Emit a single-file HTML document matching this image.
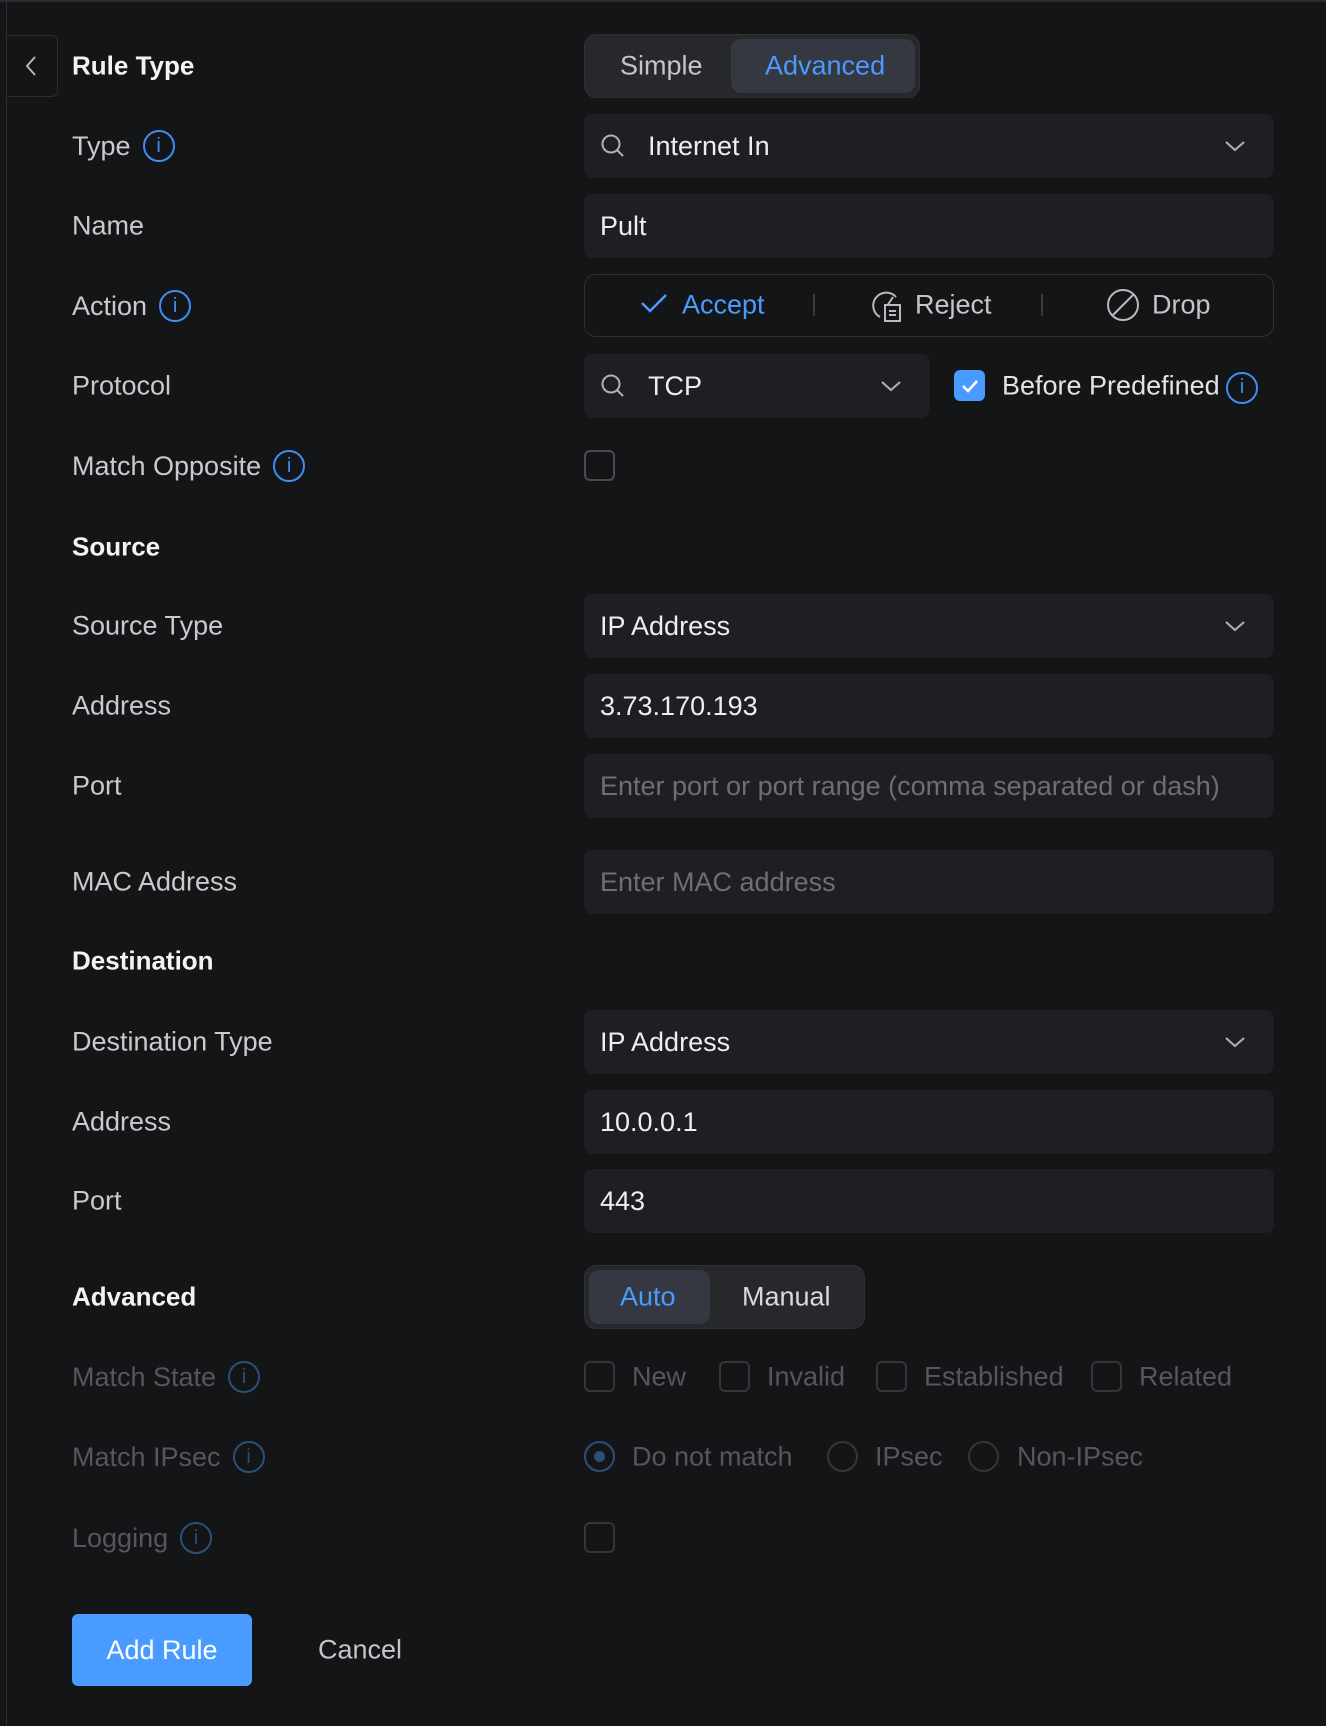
<!DOCTYPE html>
<html><head><meta charset="utf-8"><style>
*{box-sizing:border-box;margin:0;padding:0}
body{width:1326px;height:1726px;background:#141517;font-family:"Liberation Sans",sans-serif;color:#d4d5d8;position:relative;overflow:hidden;font-size:27px}
.a{position:absolute}
.lbl{position:absolute;left:72px;transform:translateY(-50%);color:#c9cacd;white-space:nowrap;display:flex;align-items:center;gap:12px;margin-top:1px}
.h{font-weight:bold;color:#f2f3f5;font-size:26px}
.dis{color:#55575c}
.fld{position:absolute;left:584px;width:690px;height:64px;background:#1e1f22;border-radius:8px;display:flex;align-items:center;padding-left:16px;color:#eceef0}
.ph{color:#6d6f74}
.info{width:32px;height:32px;border:2px solid #3d8ef0;border-radius:50%;display:inline-flex;align-items:center;justify-content:center;color:#3d8ef0;font-size:20px;font-family:"Liberation Sans",sans-serif}
.info.d{border-color:#2c4f7a;color:#2c4f7a}
.chev{position:absolute;right:28px;top:25px}
.cb{position:absolute;width:31px;height:31px;border:2px solid #4a4c51;border-radius:6px}
.cb.d{border-color:#34363a}
.rd{position:absolute;width:31px;height:31px;border:2px solid #34363a;border-radius:50%}
.t{position:absolute;transform:translateY(-50%);white-space:nowrap}
</style></head><body>
<div class="a" style="left:0;top:0;width:1326px;height:2px;background:#2a2b2e"></div>
<div class="a" style="left:6px;top:0;width:1px;height:1726px;background:#2a2b2e"></div>
<div class="a" style="left:6px;top:35px;width:52px;height:62px;border:1px solid #2c2d31;border-left:none;border-radius:0 6px 6px 0"></div>
<svg class="a" style="left:24px;top:55px" width="14" height="22"><path d="M11 2 L3 11 L11 20" stroke="#b7b8bb" stroke-width="2" fill="none"/></svg>

<div class="lbl h" style="top:65px">Rule Type</div>
<div class="a" style="left:584px;top:34px;width:336px;height:64px;background:#26282c;border-radius:12px;border:1px solid #2e3034"></div>
<div class="a" style="left:731px;top:39px;width:184px;height:54px;background:#353840;border-radius:10px"></div>
<div class="t" style="left:620px;top:66px;color:#c4c5c8">Simple</div>
<div class="t" style="left:765px;top:66px;color:#4a9bff">Advanced</div>

<div class="lbl" style="top:145px">Type <span class="info">i</span></div>
<div class="fld" style="top:114px"><svg width="26" height="26" style="margin-right:22px"><circle cx="11" cy="11" r="8.5" stroke="#b0b1b4" stroke-width="2" fill="none"/><path d="M17 17 L23 23" stroke="#b0b1b4" stroke-width="2"/></svg>Internet In<svg class="chev" width="22" height="14"><path d="M2 3 L11 11 L20 3" stroke="#b0b1b4" stroke-width="2" fill="none"/></svg></div>

<div class="lbl" style="top:225px">Name</div>
<div class="fld" style="top:194px">Pult</div>

<div class="lbl" style="top:305px">Action <span class="info">i</span></div>
<div class="a" style="left:584px;top:274px;width:690px;height:63px;border:1px solid #2f3034;border-radius:12px"></div>
<svg class="a" style="left:640px;top:292px" width="28" height="22"><path d="M2 11 L10 19 L26 3" stroke="#4a9bff" stroke-width="2.5" fill="none"/></svg>
<div class="t" style="left:682px;top:305px;color:#4a9bff">Accept</div>
<div class="a" style="left:813px;top:294px;width:2px;height:22px;background:#3a3b3f"></div>
<svg class="a" style="left:870px;top:289px" width="34" height="34"><path d="M26 8 A13 13 0 1 0 10 28" stroke="#b9babd" stroke-width="2" fill="none"/><path d="M17 17 L23 8" stroke="#b9babd" stroke-width="2"/><rect x="15" y="16" width="15" height="16" stroke="#b9babd" stroke-width="2" fill="#141517"/><path d="M19 22h7M19 26h7" stroke="#b9babd" stroke-width="2"/></svg>
<div class="t" style="left:915px;top:305px;color:#c4c5c8">Reject</div>
<div class="a" style="left:1041px;top:294px;width:2px;height:22px;background:#3a3b3f"></div>
<svg class="a" style="left:1106px;top:288px" width="34" height="34"><circle cx="17" cy="17" r="15" stroke="#b9babd" stroke-width="2" fill="none"/><path d="M7 27 L27 7" stroke="#b9babd" stroke-width="2"/></svg>
<div class="t" style="left:1152px;top:305px;color:#c4c5c8">Drop</div>

<div class="lbl" style="top:385px">Protocol</div>
<div class="fld" style="top:354px;width:346px"><svg width="26" height="26" style="margin-right:22px"><circle cx="11" cy="11" r="8.5" stroke="#b0b1b4" stroke-width="2" fill="none"/><path d="M17 17 L23 23" stroke="#b0b1b4" stroke-width="2"/></svg>TCP<svg class="chev" width="22" height="14"><path d="M2 3 L11 11 L20 3" stroke="#b0b1b4" stroke-width="2" fill="none"/></svg></div>
<div class="a" style="left:954px;top:370px;width:31px;height:31px;background:#4a9bff;border-radius:6px"></div>
<svg class="a" style="left:958px;top:375px" width="24" height="22"><path d="M5 11 L10 16 L19 6" stroke="#fff" stroke-width="2.5" fill="none"/></svg>
<div class="t" style="left:1002px;top:386px;color:#e2e3e5">Before Predefined</div>
<div class="a" style="left:1226px;top:369px"><span class="info">i</span></div>

<div class="lbl" style="top:465px">Match Opposite <span class="info">i</span></div>
<div class="cb" style="left:584px;top:450px"></div>

<div class="lbl h" style="top:546px">Source</div>
<div class="lbl" style="top:625px">Source Type</div>
<div class="fld" style="top:594px">IP Address<svg class="chev" width="22" height="14"><path d="M2 3 L11 11 L20 3" stroke="#b0b1b4" stroke-width="2" fill="none"/></svg></div>
<div class="lbl" style="top:705px">Address</div>
<div class="fld" style="top:674px">3.73.170.193</div>
<div class="lbl" style="top:785px">Port</div>
<div class="fld ph" style="top:754px">Enter port or port range (comma separated or dash)</div>
<div class="lbl" style="top:881px">MAC Address</div>
<div class="fld ph" style="top:850px">Enter MAC address</div>

<div class="lbl h" style="top:960px">Destination</div>
<div class="lbl" style="top:1041px">Destination Type</div>
<div class="fld" style="top:1010px">IP Address<svg class="chev" width="22" height="14"><path d="M2 3 L11 11 L20 3" stroke="#b0b1b4" stroke-width="2" fill="none"/></svg></div>
<div class="lbl" style="top:1121px">Address</div>
<div class="fld" style="top:1090px">10.0.0.1</div>
<div class="lbl" style="top:1200px">Port</div>
<div class="fld" style="top:1169px">443</div>

<div class="lbl h" style="top:1296px">Advanced</div>
<div class="a" style="left:584px;top:1265px;width:281px;height:64px;background:#26282c;border-radius:12px;border:1px solid #2e3034"></div>
<div class="a" style="left:589px;top:1270px;width:121px;height:54px;background:#353840;border-radius:10px"></div>
<div class="t" style="left:620px;top:1297px;color:#4a9bff">Auto</div>
<div class="t" style="left:742px;top:1297px;color:#d8d9dc">Manual</div>

<div class="lbl dis" style="top:1376px">Match State <span class="info d">i</span></div>
<div class="cb d" style="left:584px;top:1361px"></div><div class="t dis" style="left:632px;top:1377px">New</div>
<div class="cb d" style="left:719px;top:1361px"></div><div class="t dis" style="left:767px;top:1377px">Invalid</div>
<div class="cb d" style="left:876px;top:1361px"></div><div class="t dis" style="left:924px;top:1377px">Established</div>
<div class="cb d" style="left:1091px;top:1361px"></div><div class="t dis" style="left:1139px;top:1377px">Related</div>

<div class="lbl dis" style="top:1456px">Match IPsec <span class="info d">i</span></div>
<div class="rd" style="left:584px;top:1441px;border-color:#2c4f7a"></div><div class="a" style="left:594px;top:1451px;width:11px;height:11px;border-radius:50%;background:#2c4f7a"></div>
<div class="t dis" style="left:632px;top:1457px">Do not match</div>
<div class="rd" style="left:827px;top:1441px"></div><div class="t dis" style="left:875px;top:1457px">IPsec</div>
<div class="rd" style="left:968px;top:1441px"></div><div class="t dis" style="left:1017px;top:1457px">Non-IPsec</div>

<div class="lbl dis" style="top:1537px">Logging <span class="info d">i</span></div>
<div class="cb d" style="left:584px;top:1522px"></div>

<div class="a" style="left:72px;top:1614px;width:180px;height:72px;background:#4a9bff;border-radius:6px;color:#fff;display:flex;align-items:center;justify-content:center">Add Rule</div>
<div class="t" style="left:318px;top:1650px;color:#c4c5c8">Cancel</div>
</body></html>
